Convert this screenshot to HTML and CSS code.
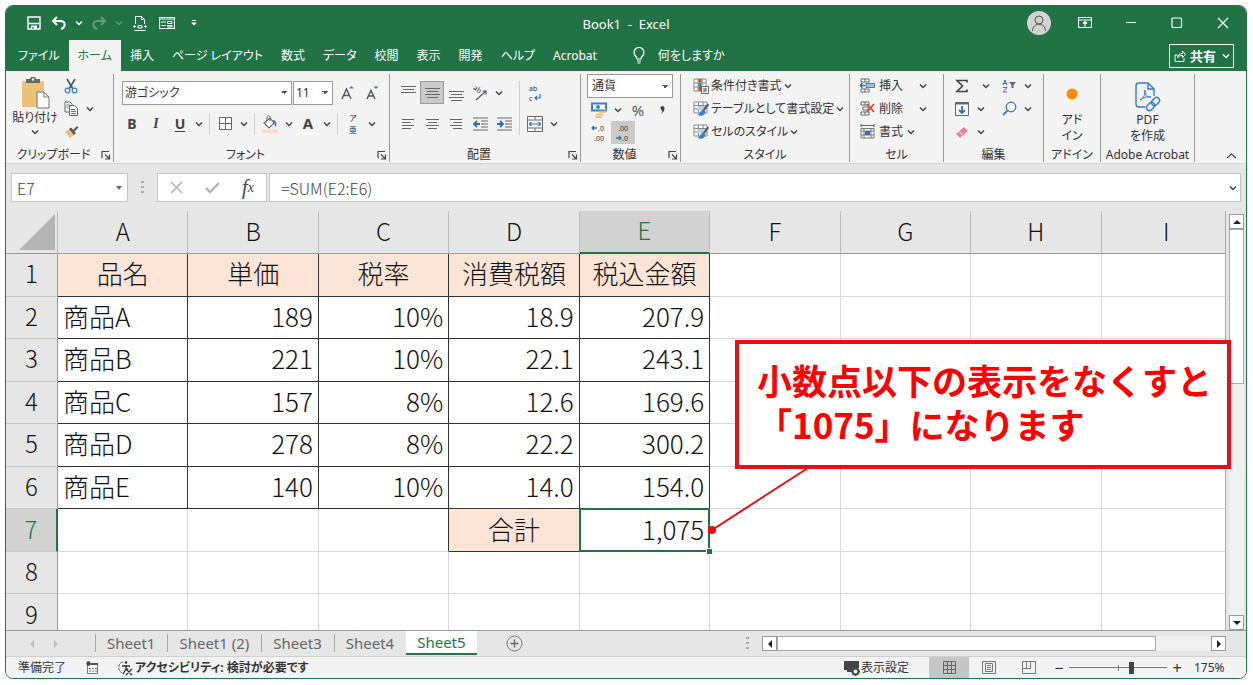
FILE: index.html
```html
<!DOCTYPE html>
<html lang="ja">
<head>
    <meta charset="UTF-8">
    <meta name="viewport" content="width=device-width, initial-scale=1.0">
    <title>Book1 - Excel</title>
    <link rel="stylesheet" href="styles.css">
</head>
<body>

<svg class="defs" aria-hidden="true">
    <symbol id="chev" viewBox="0 0 8 8"><path d="M1 2.500l3 3 3-3" fill="none" stroke="currentColor" stroke-width="1.500"/></symbol>
    <symbol id="launch" viewBox="0 0 10 10"><path d="M1 8V1.500h7M4 4.500l4 4M8.500 4.500v4.500H4" fill="none" stroke="#444" stroke-width="1.200"/></symbol>
    <symbol id="brushcell" viewBox="0 0 16 16"><path d="M1 1h13v11H1zM1 4.500h13M1 8h13M5.500 1v11M10 1v11" fill="#fff" stroke="#888"/><path d="M5 5h8v4H5z" fill="#b9d2ea"/><path d="M15.500 3L10 10" stroke="#555" stroke-width="2"/><path d="M10.500 8.500c-3 0-3 4-6 5.500 4 2 8 0 8-4z" fill="#3f7fc3"/></symbol>
</svg>

<div class="window">
    <!-- タイトルバー -->
    <header class="titlebar">
        <div class="quick">
            <button aria-label="上書き保存"><svg width="14" height="14" viewBox="0 0 14 14"><path d="M1 1h12v12H1z" fill="none" stroke="#fff" stroke-width="1.400"/><path d="M2 7.500h10" stroke="#fff" stroke-width="1.300"/><path d="M4 13V9.500h6V13z" fill="#fff"/><path d="M6 11v2" stroke="#217346" stroke-width="1.300"/></svg></button>
            <button aria-label="元に戻す"><svg width="16" height="14" viewBox="0 0 16 14"><path d="M6 1L2 5l4 4M2 5h7c6 0 6 6 1 8" fill="none" stroke="#fff" stroke-width="2"/></svg></button>
            <svg class="chev white"><use href="#chev"/></svg>
            <button class="dim" aria-label="やり直し"><svg width="16" height="14" viewBox="0 0 16 14"><path d="M10 1l4 4-4 4M14 5H7C1 5 1 11 6 13" fill="none" stroke="#fff" stroke-width="2"/></svg></button>
            <svg class="chev white dim"><use href="#chev"/></svg>
            <button class="wide" aria-label="印刷プレビュー"><svg width="14" height="16" viewBox="0 0 14 16"><path d="M2.500 9V1.500h6l3 3V9M8.500 1.500v3h3M1.500 15.500h11" fill="none" stroke="#fff"/><path d="M0 11.500h3M11 11.500h3M5 10.500h4v2.500H5zM1.500 10v3M12.500 10v3" fill="none" stroke="#fff"/></svg></button>
            <button class="wide" aria-label="フォーム"><svg width="16" height="14" viewBox="0 0 16 14"><path d="M.500 1.500h15v11H.500zM.500 3h15" fill="none" stroke="#fff" stroke-width="1.200"/><path d="M2 6h5M2 9.500h5M8.500 5.500H13v2H8.500zM8.500 9.500H13v1.500H8.500z" fill="none" stroke="#fff"/></svg></button>
            <button class="wide" aria-label="カスタマイズ"><svg width="6" height="6" viewBox="0 0 6 6"><path d="M1 .500h4" stroke="#fff"/><path d="M0 2.500h6L3 5.500z" fill="#fff"/></svg></button>
        </div>
        <div class="doc-title">Book1&nbsp; -&nbsp; Excel</div>
        <div class="sysbuttons">
            <button class="avatar" aria-label="アカウント"><svg width="16" height="18" viewBox="0 0 16 18"><circle cx="8" cy="6" r="4" fill="none" stroke="#555"/><path d="M1.500 17c0-9 13-9 13 0" fill="none" stroke="#555"/></svg></button>
            <button aria-label="リボンの表示オプション"><svg width="14" height="12" viewBox="0 0 14 12"><path d="M.500.500h13v10H.500zM.500 3h13M7 9.500V5M5 6.500l2-2 2 2" fill="none" stroke="#fff" stroke-width="1.200"/></svg></button>
            <button aria-label="最小化"><svg width="12" height="12" viewBox="0 0 12 12"><path d="M1 5.500h10" stroke="#fff" stroke-width="1.200"/></svg></button>
            <button aria-label="最大化"><svg width="12" height="12" viewBox="0 0 12 12"><rect x="1" y="1" width="9.500" height="9.500" rx="1" fill="none" stroke="#fff" stroke-width="1.200"/></svg></button>
            <button aria-label="閉じる"><svg width="12" height="12" viewBox="0 0 12 12"><path d="M1 1l10 10M11 1L1 11" stroke="#fff" stroke-width="1.300"/></svg></button>
        </div>
    </header>

    <!-- タブ -->
    <nav class="tabs">
        <button>ファイル</button>
        <button class="current">ホーム</button>
        <button>挿入</button>
        <button>ページ レイアウト</button>
        <button>数式</button>
        <button>データ</button>
        <button>校閲</button>
        <button>表示</button>
        <button>開発</button>
        <button>ヘルプ</button>
        <button>Acrobat</button>
        <button class="tell"><svg width="12" height="17" viewBox="0 0 12 17"><path d="M4 12c0-3-3-3-3-6.500a5 5 0 0 1 10 0C11 9 8 9 8 12zM4 14h4M4.500 16h3" fill="none" stroke="#fff" stroke-width="1.200"/></svg>何をしますか</button>
        <button class="share"><svg width="12" height="12" viewBox="0 0 12 12"><path d="M3.500 5H1v6.500h9V8M3.500 8c0-3 2-4.500 5-4.500V1l3 3.500-3 3V5.500c-2 0-4 .500-5 2.500z" fill="none" stroke="#fff"/></svg>共有<svg class="chev"><use href="#chev"/></svg></button>
    </nav>

    <!-- リボン -->
    <div class="ribbon">
        <section class="group g-clip">
            <div class="body row-body">
                <button class="paste">
                    <svg width="29" height="32" viewBox="0 0 29 32"><path d="M1 4h22v26H1z" fill="#ecc27a"/><path d="M5 6V2h4c0-3 6-3 6 0h4v4z" fill="#666"/><circle cx="12" cy="2.500" r="1.200" fill="#fff"/><path d="M16 15h7l5 5v11H16z" fill="#fff" stroke="#777"/><path d="M23 15v5h5" fill="none" stroke="#777"/></svg>
                    <span>貼り付け</span>
                    <svg class="chev"><use href="#chev"/></svg>
                </button>
                <div class="stack">
                    <div class="line"><button class="ic" aria-label="切り取り"><svg width="14" height="16" viewBox="0 0 14 16"><path d="M3 1l6 10M11 1L5 11" stroke="#555" stroke-width="1.600"/><circle cx="3.500" cy="12.500" r="2.300" fill="none" stroke="#3f7fc3" stroke-width="1.300"/><circle cx="10.500" cy="12.500" r="2.300" fill="none" stroke="#3f7fc3" stroke-width="1.300"/></svg></button></div>
                    <div class="line"><button class="ic" aria-label="コピー"><svg width="15" height="15" viewBox="0 0 15 15"><path d="M1 1h5l2 2v8H1z" fill="#fff" stroke="#666"/><path d="M5.500 4.500h5l3 3v7h-8z" fill="#fff" stroke="#666"/><path d="M2.500 4h3M2.500 6h2M7 8.500h4M7 10.500h5M7 12.500h5" stroke="#3f7fc3"/></svg></button><svg class="chev"><use href="#chev"/></svg></div>
                    <div class="line"><button class="ic" aria-label="書式のコピー"><svg width="15" height="14" viewBox="0 0 15 14"><path d="M1 7l4-3 5 6-4 3z" fill="#ecc27a"/><path d="M5 4l2-1.500 5 5.500-2 2z" fill="#555"/><path d="M9 5l4-4 1.500 1.500-4 4z" fill="#555"/></svg></button></div>
                </div>
            </div>
            <footer><span>クリップボード</span><svg class="launch"><use href="#launch"/></svg></footer>
        </section>

        <section class="group g-font">
            <div class="body two">
                <div class="line fonts">
                    <select class="font-name" aria-label="フォント"><option>游ゴシック</option></select>
                    <select class="font-size" aria-label="フォント サイズ"><option>11</option></select>
                    <button class="ic" aria-label="拡大"><svg width="16" height="16" viewBox="0 0 16 16"><path d="M2 14L6.500 4 11 14M3.500 10.500h6" fill="none" stroke="#555" stroke-width="1.400"/><path d="M9 3.500l2.500-2.500L14 3.500z" fill="#3f7fc3"/></svg></button>
                    <button class="ic" aria-label="縮小"><svg width="16" height="16" viewBox="0 0 16 16"><path d="M2 14L6 5.500 10 14M3.500 11h5" fill="none" stroke="#555" stroke-width="1.400"/><path d="M8.500 1.500h5L11 4z" fill="#3f7fc3"/></svg></button>
                </div>
                <div class="line">
                    <button class="ic letter b">B</button>
                    <button class="ic letter i">I</button>
                    <button class="ic letter u">U</button>
                    <svg class="chev"><use href="#chev"/></svg>
                    <i class="sep"></i>
                    <button class="ic" aria-label="罫線"><svg width="15" height="15" viewBox="0 0 15 15"><path d="M1.500 1.500h12v12h-12zM7.500 1.500v12M1.500 7.500h12" fill="#fff" stroke="#666"/></svg></button>
                    <svg class="chev"><use href="#chev"/></svg>
                    <i class="sep"></i>
                    <button class="ic" aria-label="塗りつぶし"><svg width="16" height="18" viewBox="0 0 16 18"><path d="M2 8l6-5 4 5-5 5z" fill="#fff" stroke="#666" stroke-width="1.200"/><path d="M5 6V2c0-2 3-1.500 3 0v4" fill="none" stroke="#666"/><path d="M11 5c3 0 4 3 3 7-2-1-1-4-3-5z" fill="#3f7fc3"/><path d="M0 14.500h16V18H0z" fill="#fbdcc8"/></svg></button>
                    <svg class="chev"><use href="#chev"/></svg>
                    <button class="ic letter color">A</button>
                    <svg class="chev"><use href="#chev"/></svg>
                    <i class="sep"></i>
                    <button class="ic ruby"><span>ア</span><span>亜</span></button>
                    <svg class="chev"><use href="#chev"/></svg>
                </div>
            </div>
            <footer><span>フォント</span><svg class="launch"><use href="#launch"/></svg></footer>
        </section>

        <section class="group g-align">
            <div class="body row-body">
                <div class="two">
                    <div class="line">
                        <button class="ic" aria-label="上揃え"><svg width="15" height="16" viewBox="0 0 15 16"><path d="M0 1.500h15M2 4.500h11M0 7.500h15" stroke="#666"/></svg></button>
                        <button class="ic on" aria-label="上下中央揃え"><svg width="15" height="16" viewBox="0 0 15 16"><path d="M0 3.500h15M2 6.500h11M0 9.500h15M2 12.500h11" stroke="#666"/></svg></button>
                        <button class="ic" aria-label="下揃え"><svg width="15" height="16" viewBox="0 0 15 16"><path d="M0 6.500h15M2 9.500h11M0 12.500h15M2 15.500h11" stroke="#666"/></svg></button>
                        <button class="ic" aria-label="方向"><svg width="18" height="18" viewBox="0 0 18 18"><text x="2" y="8" class="tiny" transform="rotate(35 7 6)">ab</text><path d="M5 16L15 7M11.500 7H15v3.500" fill="none" stroke="#555" stroke-width="1.200"/></svg></button>
                        <svg class="chev"><use href="#chev"/></svg>
                    </div>
                    <div class="line">
                        <button class="ic" aria-label="左揃え"><svg width="12" height="12" viewBox="0 0 12 12"><path d="M0 1.500h12M0 4.500h9M0 7.500h12M0 10.500h9" stroke="#666"/></svg></button>
                        <button class="ic" aria-label="中央揃え"><svg width="13" height="12" viewBox="0 0 13 12"><path d="M0 1.500h13M2 4.500h9M0 7.500h13M2 10.500h9" stroke="#666"/></svg></button>
                        <button class="ic" aria-label="右揃え"><svg width="12" height="12" viewBox="0 0 12 12"><path d="M0 1.500h12M3 4.500h9M0 7.500h12M3 10.500h9" stroke="#666"/></svg></button>
                        <button class="ic" aria-label="インデントを減らす"><svg width="15" height="14" viewBox="0 0 15 14"><path d="M0 1h15M8 4h7M8 7h7M8 10h7M0 13h15" stroke="#666"/><path d="M7 7H1M4 4L1 7l3 3" fill="none" stroke="#2f6fba" stroke-width="1.800"/></svg></button>
                        <button class="ic" aria-label="インデントを増やす"><svg width="15" height="14" viewBox="0 0 15 14"><path d="M0 1h15M8 4h7M8 7h7M8 10h7M0 13h15" stroke="#666"/><path d="M0 7h6M3 4l3 3-3 3" fill="none" stroke="#2f6fba" stroke-width="1.800"/></svg></button>
                    </div>
                </div>
                <i class="sep tall"></i>
                <div class="two">
                    <div class="line"><button class="ic" aria-label="折り返して全体を表示"><svg width="16" height="20" viewBox="0 0 16 20"><text x="2" y="8" class="tiny">ab</text><text x="2" y="18" class="tiny">c</text><path d="M13 11v4H8M10 13l-2 2 2 2" fill="none" stroke="#2f6fba" stroke-width="1.200"/></svg></button></div>
                    <div class="line"><button class="ic" aria-label="セルを結合して中央揃え"><svg width="16" height="16" viewBox="0 0 16 16"><path d="M.500.500h15v15H.500zM.500 4h15M.500 12h15M8 .500V4M8 12v3.500" fill="#fff" stroke="#666"/><path d="M2.500 8h11M4.500 6l-2 2 2 2M11.500 6l2 2-2 2" fill="none" stroke="#2f6fba" stroke-width="1.200"/></svg></button><svg class="chev"><use href="#chev"/></svg></div>
                </div>
            </div>
            <footer><span>配置</span><svg class="launch"><use href="#launch"/></svg></footer>
        </section>

        <section class="group g-num">
            <div class="body stack">
                <select aria-label="表示形式"><option>通貨</option></select>
                <div class="line"><button class="ic" aria-label="通貨表示形式"><svg width="16" height="16" viewBox="0 0 16 16"><path d="M1 1.500h14v7H1z" fill="#fff" stroke="#3f7fc3" stroke-width="2"/><circle cx="7" cy="5" r="2" fill="#3f7fc3"/><path d="M9 7.500h6M8 10h7M5 12.500h7M4 15h7" stroke="#ecb765" stroke-width="1.600"/></svg></button><svg class="chev"><use href="#chev"/></svg><button class="ic pct">%</button><button class="ic" aria-label="桁区切り"><svg width="5" height="10" viewBox="0 0 5 10"><path d="M2.500 1c3 0 3 6-2 8 2-2 2-3 1-4-2-1-1-4 1-4z" fill="#444"/></svg></button></div>
                <div class="line"><button class="ic" aria-label="小数点以下の表示桁数を増やす"><svg width="18" height="20" viewBox="0 0 18 20"><text x="8" y="8" class="tiny">.0</text><text x="4" y="18" class="tiny">.00</text><path d="M7 5H2M4 3L2 5l2 2" fill="none" stroke="#2f6fba" stroke-width="1.300"/></svg></button><button class="ic on" aria-label="小数点以下の表示桁数を減らす"><svg width="18" height="20" viewBox="0 0 18 20"><text x="4" y="8" class="tiny">.00</text><text x="8" y="18" class="tiny">.0</text><path d="M2 15h5M5 13l2 2-2 2" fill="none" stroke="#2f6fba" stroke-width="1.300"/></svg></button></div>
            </div>
            <footer><span>数値</span><svg class="launch"><use href="#launch"/></svg></footer>
        </section>

        <section class="group g-style">
            <div class="body stack">
                <button class="cmd"><svg width="16" height="16" viewBox="0 0 16 16"><path d="M1 1h12v12H1zM1 5h12M1 9h12M5 1v12M9 1v12" fill="#fff" stroke="#888"/><path d="M5.500 1h3v3.500h-3zM5.500 9h3v4h-3z" fill="#d7492f"/><path d="M5.500 5h3v4h-3z" fill="#3f7fc3"/><path d="M8.500 8.500h7v7h-7zM10 11h4M10 13h4M13 10l-2 4" fill="#fff" stroke="#666"/></svg>条件付き書式<svg class="chev"><use href="#chev"/></svg></button>
                <button class="cmd"><svg width="16" height="16"><use href="#brushcell"/></svg>テーブルとして書式設定<svg class="chev"><use href="#chev"/></svg></button>
                <button class="cmd"><svg width="16" height="16"><use href="#brushcell"/></svg>セルのスタイル<svg class="chev"><use href="#chev"/></svg></button>
            </div>
            <footer><span>スタイル</span></footer>
        </section>

        <section class="group g-cell">
            <div class="body stack">
                <button class="cmd"><svg width="15" height="15" viewBox="0 0 15 15"><path d="M1 1h8v3H1zM1 11h8v3H1zM5 1v3M5 11v3" fill="#fff" stroke="#666"/><path d="M6 5.500h8.500v4H6z" fill="#9dc3e6" stroke="#3f7fc3"/><path d="M5 7.500H0M2.500 5L0 7.500 2.500 10" fill="none" stroke="#2f6fba" stroke-width="1.400"/></svg>挿入<svg class="chev far"><use href="#chev"/></svg></button>
                <button class="cmd"><svg width="15" height="15" viewBox="0 0 15 15"><path d="M1 1h8v3H1zM1 11h8v3H1zM5 1v3M5 11v3M3 6h5v3H3z" fill="#fff" stroke="#666"/><path d="M7 3l7 8M14 3l-7 8" stroke="#e0452c" stroke-width="1.800"/></svg>削除<svg class="chev far"><use href="#chev"/></svg></button>
                <button class="cmd"><svg width="15" height="16" viewBox="0 0 15 16"><path d="M1 0v3M14 0v3M1 1.500h13" stroke="#2f6fba"/><path d="M1 4.500h13V14H1zM1 7h13M1 11h13M4 4.500V14M11 4.500V14" fill="#fff" stroke="#777"/><path d="M5 7h5v4H5z" fill="#2f6fba"/></svg>書式<svg class="chev"><use href="#chev"/></svg></button>
            </div>
            <footer><span>セル</span></footer>
        </section>

        <section class="group g-edit">
            <div class="body row-body">
                <div class="stack">
                    <div class="line"><button class="ic" aria-label="合計"><svg width="14" height="14" viewBox="0 0 14 14"><path d="M12 3.500V1.500H2L7.500 7 2 12.500h10v-2" fill="none" stroke="#444" stroke-width="1.700"/></svg></button><svg class="chev far"><use href="#chev"/></svg></div>
                    <div class="line"><button class="ic" aria-label="フィル"><svg width="14" height="14" viewBox="0 0 14 14"><path d="M.500.500h13v13H.500z" fill="#fff" stroke="#666"/><path d="M0 1.500h14" stroke="#666" stroke-width="2"/><path d="M7 4v7M4 8l3 3 3-3" fill="none" stroke="#2f6fba" stroke-width="1.800"/></svg></button><svg class="chev"><use href="#chev"/></svg></div>
                    <div class="line"><button class="ic" aria-label="クリア"><svg width="14" height="14" viewBox="0 0 14 14"><path d="M1 9l8-7 4 4-8 7z" fill="#e4879a"/><path d="M4 6.500l4 4" stroke="#f8dfe4"/></svg></button><svg class="chev"><use href="#chev"/></svg></div>
                </div>
                <div class="stack">
                    <div class="line"><button class="ic" aria-label="並べ替えとフィルター"><svg width="15" height="14" viewBox="0 0 15 14"><path d="M1 6l2-5 2 5M1.500 4.500h3" fill="none" stroke="#2f6fba"/><path d="M1 8.500h4L1 13h4" fill="none" stroke="#8a4fb0"/><path d="M7 3h7l-2.500 3v3h-2V6z" fill="#666"/></svg></button><svg class="chev"><use href="#chev"/></svg></div>
                    <div class="line"><button class="ic" aria-label="検索と選択"><svg width="15" height="15" viewBox="0 0 15 15"><circle cx="9" cy="6" r="4.700" fill="#fff" stroke="#3f7fc3" stroke-width="1.500"/><path d="M5.500 9.500L1 14" stroke="#3f7fc3" stroke-width="1.800"/></svg></button><svg class="chev"><use href="#chev"/></svg></div>
                </div>
            </div>
            <footer><span>編集</span></footer>
        </section>

        <section class="group g-addin">
            <button class="big"><svg width="26" height="30" viewBox="0 0 26 30"><circle cx="13" cy="12" r="5.500" fill="#ff8c00"/></svg><span>アド<br>イン</span></button>
            <footer><span>アドイン</span></footer>
        </section>

        <section class="group g-acro">
            <button class="big"><svg width="26" height="30" viewBox="0 0 26 30"><path d="M10 25H4c-2 0-3-1-3-3V4c0-2 1-3 3-3h9l6 6v7M13 1v6h6" fill="none" stroke="#3b76e0" stroke-width="1.400"/><path d="M5 18c4-2 6-7 5-10-2 3 2 8 6 7-4-1-8 1-11 3z" fill="none" stroke="#3b76e0"/><g fill="none" stroke="#3b76e0" stroke-width="1.400" transform="rotate(-45 18 22)"><rect x="10" y="19" width="9" height="6" rx="3"/><rect x="17" y="19" width="9" height="6" rx="3"/></g></svg><span>PDF<br>を作成</span></button>
            <footer><span>Adobe Acrobat</span></footer>
        </section>
        <button class="collapse" aria-label="リボンを折りたたむ"><svg width="11" height="8" viewBox="0 0 11 8"><path d="M1 6l4.500-4L10 6" fill="none" stroke="#444" stroke-width="1.200"/></svg></button>
    </div>

    <!-- 数式バー -->
    <div class="formula-bar">
        <div class="name-box"><input type="text" value="E7" aria-label="名前ボックス"><i class="tri"></i></div>
        <i class="dots"></i>
        <div class="fx">
            <button aria-label="キャンセル"><svg width="13" height="13" viewBox="0 0 13 13"><path d="M1 1l11 11M12 1L1 12" stroke="#b5b5b5" stroke-width="1.600"/></svg></button>
            <button aria-label="入力"><svg width="15" height="13" viewBox="0 0 15 13"><path d="M1 7l4 4 9-9" fill="none" stroke="#b5b5b5" stroke-width="2.400"/></svg></button>
            <button class="fn"><i>f</i><small>x</small></button>
        </div>
        <div class="formula"><input type="text" value="=SUM(E2:E6)" aria-label="数式"><svg class="chev"><use href="#chev"/></svg></div>
    </div>

    <!-- ワークシート -->
    <main class="sheet">
        <div class="cells">
            <table>
                <thead>
                    <tr><th class="corner"><i></i></th><th>A</th><th>B</th><th>C</th><th>D</th><th class="sel">E</th><th>F</th><th>G</th><th>H</th><th>I</th></tr>
                </thead>
                <tbody>
                    <tr><th>1</th><td class="ink head">品名</td><td class="ink head">単価</td><td class="ink head">税率</td><td class="ink head">消費税額</td><td class="ink head">税込金額</td><td></td><td></td><td></td><td></td></tr>
                    <tr><th>2</th><td class="ink">商品A</td><td class="ink num">189</td><td class="ink num">10%</td><td class="ink num">18.9</td><td class="ink num">207.9</td><td></td><td></td><td></td><td></td></tr>
                    <tr><th>3</th><td class="ink">商品B</td><td class="ink num">221</td><td class="ink num">10%</td><td class="ink num">22.1</td><td class="ink num">243.1</td><td></td><td></td><td></td><td></td></tr>
                    <tr><th>4</th><td class="ink">商品C</td><td class="ink num">157</td><td class="ink num">8%</td><td class="ink num">12.6</td><td class="ink num">169.6</td><td></td><td></td><td></td><td></td></tr>
                    <tr><th>5</th><td class="ink">商品D</td><td class="ink num">278</td><td class="ink num">8%</td><td class="ink num">22.2</td><td class="ink num">300.2</td><td></td><td></td><td></td><td></td></tr>
                    <tr><th>6</th><td class="ink">商品E</td><td class="ink num">140</td><td class="ink num">10%</td><td class="ink num">14.0</td><td class="ink num">154.0</td><td></td><td></td><td></td><td></td></tr>
                    <tr><th class="sel">7</th><td></td><td></td><td class="edge"></td><td class="ink head">合計</td><td class="ink num active">1,075</td><td></td><td></td><td></td><td></td></tr>
                    <tr><th>8</th><td></td><td></td><td></td><td></td><td></td><td></td><td></td><td></td><td></td></tr>
                    <tr><th>9</th><td></td><td></td><td></td><td></td><td></td><td></td><td></td><td></td><td></td></tr>
                </tbody>
            </table>
        </div>
        <div class="vscroll">
            <button aria-label="上へ"><i class="arrow up"></i></button>
            <div class="vthumb"></div>
            <div class="vtrack"></div>
            <button aria-label="下へ"><i class="arrow down"></i></button>
        </div>

        <!-- 吹き出し -->
        <svg class="leader" width="110" height="74" viewBox="0 0 110 74"><path d="M6 68L105 4" stroke="#e01218" stroke-width="2"/><circle cx="6" cy="68" r="4" fill="#f00"/></svg>
        <div class="callout">小数点以下の表示をなくすと<br>「1075」になります</div>
    </main>

    <!-- シート見出し -->
    <div class="sheet-bar">
        <button class="nav" aria-label="前へ"><i class="arrow left"></i></button>
        <button class="nav" aria-label="次へ"><i class="arrow right"></i></button>
        <div class="sheet-tabs">
            <button>Sheet1</button>
            <button>Sheet1 (2)</button>
            <button>Sheet3</button>
            <button>Sheet4</button>
            <button class="current">Sheet5</button>
        </div>
        <button class="add" aria-label="新しいシート"><svg width="17" height="17" viewBox="0 0 17 17"><circle cx="8.500" cy="8.500" r="7.500" fill="none" stroke="#777"/><path d="M8.500 4.500v8M4.500 8.500h8" stroke="#666" stroke-width="1.400"/></svg></button>
        <i class="dots"></i>
        <div class="hscroll">
            <button aria-label="左へ"><i class="arrow left"></i></button>
            <div class="hthumb"></div>
            <div class="htrack"></div>
            <button aria-label="右へ"><i class="arrow right"></i></button>
        </div>
    </div>

    <!-- ステータスバー -->
    <footer class="status">
        <span class="ready">準備完了</span>
        <svg class="macro" width="13" height="13" viewBox="0 0 13 13"><path d="M1.500 3.500h10v9h-10z" fill="#fff" stroke="#777"/><path d="M5 3h7" stroke="#555" stroke-width="2"/><circle cx="2.500" cy="2.500" r="2.200" fill="#444"/><path d="M3 7.500h8M3 10h8" stroke="#777" stroke-dasharray="2 1"/></svg>
        <button class="access"><svg width="16" height="16" viewBox="0 0 16 16"><path d="M6 2C1 3 0 10 5 13" fill="none" stroke="#555" stroke-dasharray="3 1"/><circle cx="9" cy="2.500" r="1.300" fill="#333"/><path d="M5 6h8M9 5v4l-3 5M9 8l2 2M9 9l6 6M15 9l-6 6" fill="none" stroke="#333" stroke-width="1.300"/></svg>アクセシビリティ: 検討が必要です</button>
        <button class="display"><svg width="16" height="16" viewBox="0 0 16 16"><path d="M0 1h15v7H9l-2 4H3v-2H0z" fill="#444"/><circle cx="11.500" cy="11.500" r="3" fill="#f3f3f3" stroke="#444" stroke-width="2"/><path d="M11.500 7v2M11.500 14v2M7 11.500h2M14 11.500h2" stroke="#444" stroke-width="1.500"/></svg>表示設定</button>
        <div class="views">
            <button class="current" aria-label="標準"><svg width="13" height="13" viewBox="0 0 13 13"><path d="M.500.500h12v12H.500zM.500 4.500h12M.500 8.500h12M4.500.500v12M8.500.500v12" fill="none" stroke="#666"/></svg></button>
            <button aria-label="ページ レイアウト"><svg width="14" height="13" viewBox="0 0 14 13"><path d="M.500.500h13v12H.500zM3.500 2.500h7v8h-7zM5 4.500h4M5 6.500h4M5 8.500h4" fill="none" stroke="#777"/></svg></button>
            <button aria-label="改ページ プレビュー"><svg width="14" height="13" viewBox="0 0 14 13"><path d="M.500.500h13v12H.500zM.500 7.500h8v-7M4.500.500v7" fill="none" stroke="#777"/></svg></button>
        </div>
        <button class="sign">−</button>
        <input class="zoom" type="range" min="0" max="100" value="65" aria-label="ズーム">
        <button class="sign">+</button>
        <span class="percent">175%</span>
    </footer>
</div>

</body>
</html>
```
FILE: styles.css
```css
* {
    box-sizing: border-box;
}
body {
    margin: 0;
    padding: 5px 6px 6px 5px;
    height: 100vh;
    background: #fff;
    font-family: "Noto Sans", "Noto Sans CJK JP", sans-serif;
    font-feature-settings: "palt";
    font-size: 12px;
    line-height: 16px;
    color: #333;
}
button, input, select {
    font: inherit;
    font-feature-settings: inherit;
    color: inherit;
    margin: 0;
    padding: 0;
    border: 0;
    background: none;
}
button {
    display: inline-flex;
    align-items: center;
    justify-content: center;
    white-space: nowrap;
}
svg {
    flex: none;
    display: block;
}
.defs {
    display: none;
}
.chev {
    width: 8px;
    height: 8px;
    margin: 0 3px;
    color: #444;
}
.chev.white {
    color: #fff;
}
.dim {
    opacity: 0.3;
}
.tiny {
    font: 7px "Noto Sans", sans-serif;
    fill: #333;
}
.window {
    height: 100%;
    display: flex;
    flex-direction: column;
    border: 1px solid #217346;
    border-radius: 8px;
    overflow: hidden;
    background: #e6e6e6;
}

/* タイトルバー */
.titlebar {
    display: grid;
    grid-template-columns: 1fr auto 1fr;
    align-items: center;
    height: 34px;
    flex: none;
    background: #217346;
    color: #fff;
}
.quick {
    display: flex;
    align-items: center;
    gap: 1px;
    padding-left: 16px;
}
.quick button {
    width: 24px;
}
.quick button.wide {
    width: 26px;
}
.doc-title {
    padding-top: 2px;
    font-size: 13px;
}
.sysbuttons {
    display: flex;
    justify-content: flex-end;
    align-items: center;
}
.sysbuttons button {
    width: 46px;
    height: 24px;
}
.sysbuttons .avatar {
    width: 24px;
    margin-right: 11px;
    border-radius: 50%;
    background: #d2d2d2;
}

/* タブ */
.tabs {
    display: flex;
    height: 31px;
    flex: none;
    padding: 0 12px 0 3px;
    background: #217346;
    color: #fff;
}
.tabs button {
    padding: 0 9px;
}
.tabs .current {
    background: #f3f3f3;
    color: #217346;
}
.tabs .tell {
    gap: 13px;
    margin-left: 18px;
}
.tabs .share {
    margin: 4px 0 3px auto;
    padding: 0 1px 0 4px;
    gap: 4px;
    border: 1px solid #fff;
    font-size: 13px;
    font-weight: bold;
}
.share .chev {
    color: #fff;
    margin: 0 2px;
}

/* リボン */
.ribbon {
    display: flex;
    height: 93px;
    flex: none;
    padding: 3px 0 1px;
    background: #f3f3f3;
    border-bottom: 1px solid #d4d4d4;
}
.group {
    display: flex;
    flex-direction: column;
    flex: none;
    border-right: 1px solid #999;
}
.g-clip { width: 108px; }
.g-font { width: 276px; }
.g-align { width: 191px; }
.g-num { width: 100px; }
.g-style { width: 169px; }
.g-cell { width: 94px; }
.g-edit { width: 100px; }
.g-addin { width: 57px; }
.g-acro { width: 94px; }
.body {
    flex: 1;
    padding-left: 6px;
}
.row-body {
    display: flex;
}
.line {
    display: flex;
    align-items: center;
    height: 23px;
}
.two {
    display: flex;
    flex-direction: column;
    gap: 8px;
    padding-top: 7px;
}
.ic {
    width: 24px;
    height: 23px;
    flex: none;
}
.on {
    background: #cacaca;
}
.g-align .on {
    box-shadow: inset 0 0 0 1px #999;
}
.sep {
    width: 1px;
    height: 22px;
    margin: 0 3px;
    background: #cfcfcf;
}
.sep.tall {
    height: 54px;
    margin-top: 7px;
}
.group footer {
    display: flex;
    align-items: center;
    justify-content: center;
    height: 14px;
    white-space: nowrap;
}
.launch {
    width: 10px;
    height: 10px;
}
.group footer:has(.launch) span {
    flex: 1;
    text-align: center;
}
.group footer:has(.launch) {
    padding-right: 2px;
}
.paste {
    flex-direction: column;
    justify-content: flex-start;
    width: 48px;
    padding-top: 3px;
    gap: 1px;
}
.paste .chev {
    margin-top: 1px;
}
.g-clip .body {
    padding-left: 5px;
}
.fonts {
    padding-left: 2px;
    gap: 1px;
}
select {
    appearance: none;
    height: 24px;
    padding: 0 4px;
    border: 1px solid #999;
    background-color: #fff;
    background-image: linear-gradient(45deg, transparent 50%, #555 50%), linear-gradient(135deg, #555 50%, transparent 50%);
    background-size: 3px 3px;
    background-position: right 7px center, right 4px center;
    background-repeat: no-repeat;
}
.font-name {
    width: 170px;
    padding: 0 2px;
}
.font-size {
    width: 40px;
    padding: 0 2px;
    margin-right: 2px;
}
.letter {
    font-size: 14px;
    font-weight: bold;
    color: #444;
}
.letter.i {
    font-family: "Liberation Serif", serif;
    font-style: italic;
}
.letter.u {
    text-decoration: underline;
    text-underline-offset: 2px;
}
.letter.color {
    font-size: 15px;
    border-bottom: 2px solid #fff;
}
.ruby {
    flex-direction: column;
    font-size: 8px;
    line-height: 12px;
}
.pct {
    font-size: 15px;
    color: #555;
}
.g-num select {
    display: block;
    width: 86px;
}
.g-num .pct {
    margin-left: 1px;
}
.cmd {
    display: flex;
    justify-content: flex-start;
    height: 23px;
    gap: 4px;
}
.cmd .chev {
    margin: 0;
}
.cmd .chev.far {
    margin-left: 12px;
}
.g-style .body {
    padding-left: 12px;
}
.g-style .cmd {
    gap: 2px;
}
.g-cell .body {
    padding-left: 10px;
}
.g-edit .body {
    gap: 4px;
}
.g-edit .far {
    margin-left: 8px;
}
.big {
    flex: 1;
    flex-direction: column;
    padding-top: 3px;
}
.collapse {
    margin-left: auto;
    align-self: flex-end;
    width: 30px;
    height: 12px;
}

/* 数式バー */
.formula-bar {
    display: flex;
    align-items: center;
    height: 47px;
    flex: none;
    padding: 0 5px;
    font-family: "Noto Sans CJK JP", sans-serif;
    font-size: 16px;
}
.name-box, .fx, .formula {
    display: flex;
    align-items: center;
    height: 29px;
    background: #fff;
    border: 1px solid #c6c6c6;
}
.name-box {
    width: 117px;
    padding: 0 5px;
}
.formula-bar input {
    flex: 1;
    min-width: 0;
    color: #444;
    font-weight: 300;
}
.tri {
    border: 3px solid transparent;
    border-top: 4px solid #666;
    border-bottom: 0;
}
.dots {
    width: 3px;
    height: 13px;
    margin: 0 13px;
    background: repeating-linear-gradient(#aaa 0 2px, transparent 2px 5px);
}
.fx {
    width: 110px;
    margin-right: 2px;
}
.fx button {
    flex: 1;
}
.fx .fn {
    font: 20px "Liberation Serif", serif;
    color: #444;
}
.fn small {
    font-size: 14px;
    font-style: italic;
}
.formula {
    flex: 1;
    padding: 0 0 0 11px;
}

/* ワークシート */
.sheet {
    position: relative;
    display: flex;
    flex: 1;
    min-height: 0;
    border-bottom: 1px solid #999;
}
.cells {
    flex: 1;
    overflow: hidden;
    border-right: 1px solid #aaa;
}
.cells table {
    table-layout: fixed;
    width: calc(100% + 7px);
    height: calc(100% + 7px);
    border-spacing: 0;
    font-family: "Noto Sans CJK JP", sans-serif;
    font-feature-settings: normal;
    font-size: 26px;
    font-weight: 300;
    line-height: 32px;
    color: #111;
}
.cells th {
    padding: 0 0 3px;
    font-size: 24px;
    font-weight: 300;
    background: #e6e6e6;
    border-right: 1px solid #bbb;
    border-bottom: 1px solid #c8c8c8;
}
.cells thead th {
    height: 43px;
    border-bottom-color: #999;
}
.cells tbody th {
    border-right-color: #999;
}
.cells .corner {
    width: 52px;
    padding: 0;
}
.corner i {
    display: block;
    width: 36px;
    height: 36px;
    margin-left: 13px;
    background: #b4b4b4;
    clip-path: polygon(100% 0, 100% 100%, 0 100%);
}
.cells th.sel {
    background: #d2d2d2;
    color: #217346;
}
.cells thead .sel {
    border-bottom: 2px solid #217346;
}
.cells tbody .sel {
    border-right: 2px solid #217346;
}
.cells td {
    padding: 0 5px 3px;
    background: #fff;
    border-right: 1px solid #d9d9d9;
    border-bottom: 1px solid #d9d9d9;
    white-space: nowrap;
}
.cells td.ink {
    border-color: #333;
}
.cells td.edge {
    border-right-color: #333;
}
.cells .head {
    background: #fce4d6;
    text-align: center;
}
.cells .num {
    text-align: right;
}
.cells .active {
    position: relative;
}
.active::before {
    content: "";
    position: absolute;
    inset: -1px;
    border: 2px solid #217346;
}
.active::after {
    content: "";
    position: absolute;
    right: -3px;
    bottom: -3px;
    width: 5px;
    height: 5px;
    background: #217346;
    outline: 1px solid #fff;
}
.vscroll {
    display: flex;
    flex-direction: column;
    width: 15px;
    margin: 3px 2px 0 3px;
}
.vscroll button, .hscroll button {
    width: 15px;
    height: 15px;
    flex: none;
    background: #fff;
    border: 1px solid #999;
}
.vthumb {
    flex: 154;
    background: #fff;
    border: 1px solid #aaa;
}
.vtrack {
    flex: 233;
    background: #f0f0f0;
}
.arrow {
    border: 4px solid transparent;
}
.arrow.up {
    border-bottom-color: #222;
    border-top: 0;
}
.arrow.down {
    border-top-color: #222;
    border-bottom: 0;
}
.arrow.left {
    border-right-color: #222;
    border-left: 0;
}
.arrow.right {
    border-left-color: #222;
    border-right: 0;
}
.leader {
    position: absolute;
    left: 700px;
    top: 251px;
}
.callout {
    position: absolute;
    left: 729px;
    top: 129px;
    padding: 14px 15px 19px 18px;
    background: #fff;
    border: 4px solid #e60f14;
    color: #f00;
    font-family: "Noto Sans CJK JP", sans-serif;
    font-feature-settings: normal;
    font-size: 35px;
    font-weight: bold;
    line-height: 44px;
    white-space: nowrap;
}

/* シート見出し */
.sheet-bar {
    display: flex;
    align-items: center;
    height: 26px;
    flex: none;
    border-bottom: 1px solid #d0d0d0;
    padding-right: 20px;
}
.nav {
    width: 24px;
    opacity: 0.2;
}
.nav:first-child {
    margin-left: 14px;
}
.sheet-tabs {
    display: flex;
    height: 24px;
    margin: -2px 0 0 27px;
    font-size: 15px;
    color: #666;
}
.sheet-tabs button {
    padding: 0 12px;
    background: linear-gradient(#aaa, #aaa) left center / 1px 18px no-repeat;
}
.sheet-tabs .current {
    padding: 0 11px;
    background: #fff;
    color: #217346;
    border-bottom: 2px solid #217346;
}
.add {
    margin-left: 29px;
}
.sheet-bar .dots {
    margin-left: auto;
}
.hscroll {
    display: flex;
    width: 38%;
}
.hthumb {
    flex: 378;
    background: #fff;
    border: 1px solid #aaa;
}
.htrack {
    flex: 55;
    background: #f0f0f0;
}

/* ステータスバー */
.status {
    display: flex;
    align-items: center;
    height: 21px;
    flex: none;
    padding: 0 18px 0 12px;
    background: #f3f3f3;
}
.macro {
    margin: 0 18px 0 20px;
}
.access {
    gap: 2px;
    font-weight: bold;
}
.display {
    margin-left: auto;
    margin-right: 20px;
    gap: 1px;
}
.views {
    display: flex;
    height: 100%;
}
.views button {
    width: 40px;
}
.views .current {
    background: #c6c6c6;
}
.sign {
    width: 20px;
    font-size: 16px;
}
.zoom {
    appearance: none;
    width: 98px;
    height: 16px;
    background: linear-gradient(#777, #777) center / 1px 6px no-repeat, linear-gradient(#777, #777) center / 100% 1px no-repeat;
}
.zoom::-webkit-slider-thumb {
    appearance: none;
    width: 5px;
    height: 12px;
    background: #444;
}
.percent {
    margin-left: 7px;
    width: 34px;
}
```
